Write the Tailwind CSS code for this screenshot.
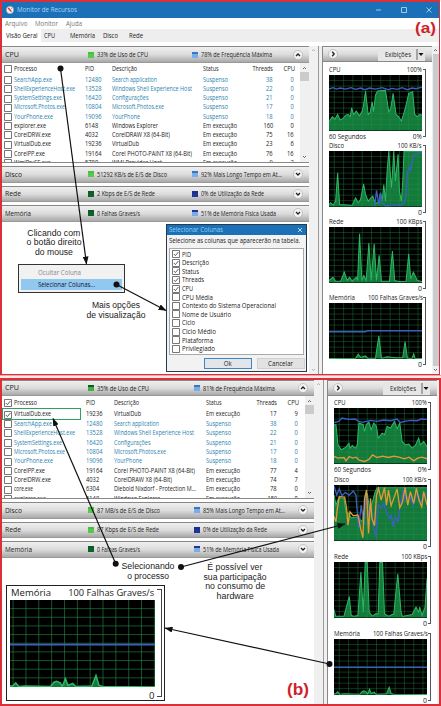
<!DOCTYPE html>
<html lang="pt-BR">
<head>
<meta charset="utf-8">
<title>Monitor de Recursos</title>
<script src="https://cdn.jsdelivr.net/npm/@tailwindcss/browser@4"></script>
</head>
<body class="w-[441px] h-[706px] overflow-hidden bg-white font-['Open_Sans','Noto_Sans',sans-serif] text-[#222]">
<div id="app" class="relative w-[441px] h-[706px] overflow-hidden"></div>
<script>
// Text run condensed or expanded horizontally to w pixels
const T = (s, w, cls = 'origin-left') => `<span data-w="${w}" class="inline-block shrink-0 whitespace-nowrap ${cls}">${s}</span>`;
const R = 'origin-right', C = 'origin-center';

const check = (on) => `<svg class="w-[8px] h-[8px] shrink-0" viewBox="0 0 8 8"><rect x=".6" y=".6" width="6.8" height="6.8" fill="#fff" stroke="#555" stroke-width=".8"/>${on ? '<path d="M1.8 4l1.6 1.6 3-3.6" fill="none" stroke="#333" stroke-width=".8"/>' : ''}</svg>`;

const square = (top, bottom) => `<span class="flex flex-col w-[6px] h-[6px] shrink-0"><span class="w-full h-[2px]" style="background:${top}"></span><span class="w-full h-[4px]" style="background:${bottom}"></span></span>`;

const round = (d) => `<svg class="w-[10px] h-[10px] shrink-0" viewBox="0 0 10 10"><circle cx="5" cy="5" r="4.5" fill="#f3f3f3" stroke="#aaa" stroke-width=".6"/><path d="${d}" fill="none" stroke="#222" stroke-width="1.3"/></svg>`;
const UP = 'M3 6l2-2 2 2', DOWN = 'M3 4l2 2 2-2', RIGHT = 'M4.2 2.8l2 2.2-2 2.2';

const bar = (b, h, x2) => `<div class="flex items-center shrink-0 w-full border-t border-[#888] border-b border-b-[#999] bg-linear-to-b from-[#efefef] via-[#dcdcdc] to-[#a9a9a9] text-[7px] leading-none" style="height:${h}px">
  <div class="w-[86px] shrink-0 pl-[3px] text-[7.5px]">${T(b.n, b.nw)}</div>
  <div class="flex items-center gap-[3px] shrink-0" style="width:${x2 - 88}px">${square(b.c1[0], b.c1[1])}${T(b.a, b.aw)}</div>
  <div class="flex items-center gap-[3px] flex-1 min-w-0">${square(b.c2[0], b.c2[1])}${T(b.b, b.bw)}</div>
  <div class="w-[16px] shrink-0">${round(b.up ? UP : DOWN)}</div></div>`;

const cell = (w, html, cls) => `<div style="width:${w}px" class="shrink-0 flex ${cls || ''}">${html}</div>`;

const row = (r, g) => {
  const live = r[4] === 'Em execução';
  return `<div class="flex items-center shrink-0 text-[6.6px] leading-none ${live ? 'text-[#222]' : 'text-[#2b83ae]'}" style="height:${g.pitch}px">
  <div class="w-[12px] shrink-0 pl-[2px] flex">${check(r[7])}</div>
  ${cell(g.pid - 14, T(r[0], r[1]))}${cell(g.desc - g.pid, T(r[2], r[2].length * 3.3))}
  ${cell(g.stat - g.desc, T(r[3][0], r[3][1]))}${cell(36, T(r[4], live ? 34 : 25))}
  ${cell(g.thr - g.stat - 36, T(r[5], String(r[5]).length * 3.3, R), 'justify-end')}
  ${cell(g.cpu - g.thr, T(r[6], String(r[6]).length * 3.3, R), 'justify-end')}</div>`;
};

const scrollbar = () => `<div class="w-[9px] shrink-0 bg-[#f0f0f0] flex flex-col items-center pt-[3px] pb-[3px]">
  <svg class="w-[5px] h-[4px]" viewBox="0 0 5 4"><path d="M1 3l1.5-1.5L4 3" fill="none" stroke="#444" stroke-width=".8"/></svg>
  <div class="w-full h-[9px] mt-[2px] bg-[#cbcbcb]"></div><div class="flex-1"></div>
  <svg class="w-[5px] h-[4px]" viewBox="0 0 5 4"><path d="M1 1l1.5 1.5L4 1" fill="none" stroke="#444" stroke-width=".8"/></svg></div>`;

const table = (rows, g) => `<div class="flex shrink-0 border-b border-[#888] overflow-hidden bg-white" style="height:${g.h}px">
  <div class="flex-1 min-w-0">
    <div class="flex items-center text-[6.6px] leading-none" style="height:${g.head}px">
      <div class="w-[12px] shrink-0 pl-[2px] flex">${check(g.on)}</div>
      ${cell(g.pid - 14, T('Processo', 23))}${cell(g.desc - g.pid, T('PID', 9))}
      ${cell(g.stat - g.desc, T('Descrição', 25))}${cell(30, T('Status', 15.5))}
      ${cell(g.thr - g.stat - 30, T('Threads', 20.5, R), 'justify-end')}${cell(g.cpu - g.thr + 1, T('CPU', 11.5, R), 'justify-end')}
    </div>
    ${rows.map(r => row(r, g)).join('')}
  </div>${scrollbar()}</div>`;

const graph = (c) => {
  let grid = '';
  for (let x = c.gx || 16; x < 280; x += c.gs || 28) grid += `M${x} 0V166`;
  for (let y = 16.5; y < 160; y += 16.5) grid += `M0 ${y}H280`;
  const line = (p, col, w) => p ? `<polyline points="${p}" fill="none" stroke="${col}" stroke-width="${w}"/>` : '';
  return `<svg class="block w-full h-full bg-black" viewBox="0 0 280 166" preserveAspectRatio="none">
  ${c.g ? `<polygon points="0,166 ${c.g} 280,166" fill="#137a3b"/>` : ''}
  <path d="${grid}" stroke="#27964b" stroke-opacity=".6" stroke-width="1.8" fill="none"/>
  ${line(c.g, '#2eb863', 3)}${line(c.b, '#3d5fc4', c.bw || 4)}${line(c.o, '#e39a35', 4)}</svg>`;
};

const chart = (c) => `<div class="flex shrink-0 text-[7px] leading-none" style="height:${c.h}px">
  <div class="w-[93px] shrink-0 flex flex-col">
    <div class="h-[11px] shrink-0 flex items-center justify-between">${T(c.n, c.nw)}${T(c.r, c.rw, R)}</div>
    <div class="h-[55.5px] shrink-0">${graph(c)}</div>
    <div class="h-[11px] shrink-0 flex items-center justify-between">${c.l ? T(c.l, 37) : '<span></span>'}${T(c.z, c.z.length > 1 ? 9 : 4, R)}</div>
  </div>
  <div class="w-[3px] h-[68px] ml-[1px] mt-[5px] border border-l-0 border-[#555]"></div></div>`;

const side = (list, pad) => `<div class="w-[110px] shrink-0 flex flex-col border-l border-[#888] bg-white">
  <div class="h-[16px] shrink-0 flex items-center pl-[5px] pr-[7px] border-t border-b border-[#888] bg-linear-to-b from-[#efefef] via-[#dcdcdc] to-[#a9a9a9] text-[7px] leading-none">
    ${round(RIGHT)}
    <div class="ml-auto h-[13px] w-[47px] flex items-center bg-[#e6e6e6] pl-[7px]"><div class="w-[31px] shrink-0">${T('Exibições', 26)}</div><svg class="w-[8px] h-[11px] shrink-0" viewBox="0 0 8 11"><path d="M1 0v11" stroke="#444" stroke-width=".8"/><path d="M2.500 4h5L5 7z" fill="#111"/></svg></div>
  </div>
  <div class="pl-[6px]" style="padding-top:${pad}px">${list.map(chart).join('')}</div></div>`;

const G = ['#43c03f', '#56c84b'], DG = ['#0c5a26', '#115e2a'], MG = ['#0c5a26', '#3fae3c'], LB = ['#3c74c4', '#78aee8'], DB = ['#1b2f8a', '#1f3698'], MB = ['#1f3698', '#78aee8'];
const S = 'Suspenso', E = 'Em execução';
const rowsA = [
  ['SearchApp.exe', 38, '12480', ['Search application', 45], S, 38, 0],
  ['ShellExperienceHost.exe', 61, '13528', ['Windows Shell Experience Host', 80], S, 22, 0],
  ['SystemSettings.exe', 48, '16420', ['Configurações', 36.5], S, 21, 0],
  ['Microsoft.Photos.exe', 51, '10804', ['Microsoft.Photos.exe', 52], S, 17, 0],
  ['YourPhone.exe', 39, '19096', ['YourPhone', 28], S, 18, 0],
  ['explorer.exe', 32, '6148', ['Windows Explorer', 46], E, 160, 0],
  ['CorelDRW.exe', 37, '4032', ['CorelDRAW X8 (64-Bit)', 58], E, 75, 16],
  ['VirtualDub.exe', 37, '19236', ['VirtualDub', 27], E, 23, 6],
  ['CorelPP.exe', 31, '19164', ['Corel PHOTO-PAINT X8 (64-Bit)', 80], E, 76, 16],
  ['WmiPrvSE.exe', 37, '5780', ['WMI Provider Host', 50], E, 9, 3]];
const rowsB = [
  ['VirtualDub.exe', 37, '19236', ['VirtualDub', 27], E, 17, 9, true],
  rowsA[0], rowsA[1], rowsA[2], rowsA[3], rowsA[4],
  ['CorelPP.exe', 31, '19164', ['Corel PHOTO-PAINT X8 (64-Bit)', 81], E, 77, 4],
  ['CorelDRW.exe', 37, '4032', ['CorelDRAW X8 (64-Bit)', 58], E, 74, 7],
  ['core.exe', 19, '6304', ['Diebold Nixdorf - Protection M...', 82], E, 78, 0],
  ['explorer.exe', 32, '6148', ['Windows Explorer', 46], E, 159, 0]];

const barsA = [
  { n: 'CPU', nw: 14, c1: G, a: '33% de Uso de CPU', aw: 51, c2: LB, b: '78% de Frequência Máxima', bw: 71, up: true },
  { n: 'Disco', nw: 17, c1: G, a: '51292 KB/s de E/S de Disco', aw: 70, c2: LB, b: '92% Mais Longo Tempo em At...', bw: 81 },
  { n: 'Rede', nw: 16, c1: DG, a: '2 Kbps de E/S de Rede', aw: 58, c2: DB, b: '0% de Utilização da Rede', bw: 63 },
  { n: 'Memória', nw: 26, c1: DG, a: '0 Falhas Graves/s', aw: 43, c2: MB, b: '51% de Memória Física Usada', bw: 75 }];
const barsB = [
  { n: 'CPU', nw: 14, c1: MG, a: '35% de Uso de CPU', aw: 52, c2: LB, b: '81% de Frequência Máxima', bw: 72, up: true },
  { n: 'Disco', nw: 17, c1: G, a: '87 MB/s de E/S de Disco', aw: 63, c2: LB, b: '85% Mais Longo Tempo em At...', bw: 82 },
  { n: 'Rede', nw: 16, c1: G, a: '87 Kbps de E/S de Rede', aw: 62, c2: DB, b: '0% de Utilização da Rede', bw: 64 },
  { n: 'Memória', nw: 27, c1: DG, a: '0 Falhas Graves/s', aw: 43, c2: MB, b: '51% de Memória Física Usada', bw: 76 }];

const memB = '0,164 5,164 11,158 17,165 30,164 78,165 85,157 90,155 97,158 101,165 107,150 112,163 121,159 127,165 158,164 166,144 172,163 180,165 280,166';
const chartsA = [
  { n: 'CPU', nw: 11.5, r: '100%', rw: 15, l: '60 Segundos', z: '0%', h: 76,
    g: '0,140 10,125 18,132 26,118 34,135 42,130 50,120 58,118 64,125 68,98 74,118 82,108 92,122 100,108 104,90 110,48 118,118 124,112 130,80 134,110 140,60 146,48 170,46 180,110 186,100 193,55 202,118 210,125 218,138 226,112 232,90 240,55 252,50 258,118 266,125 272,118 280,120',
    b: '0,42 12,38 22,42 34,39 50,42 66,38 80,43 95,39 108,44 122,39 140,42 160,38 178,44 190,40 205,43 220,38 236,44 250,39 262,41 280,36' },
  { n: 'Disco', nw: 15, r: '100 KB/s', rw: 24, z: '0', h: 76,
    g: '0,160 5,155 12,162 20,150 26,65 32,160 70,162 80,140 88,155 95,145 104,98 110,130 118,150 126,140 132,135 140,158 150,150 155,125 160,150 165,100 170,150 175,60 180,0 184,60 188,110 192,50 195,0 200,90 208,10 212,120 218,150 222,90 226,0 280,0',
    b: '138,165 143,118 150,160 155,125 160,155 170,164 220,160 230,150 237,60 243,50 246,60 253,12 280,5' },
  { n: 'Rede', nw: 14.5, r: '100 KBps', rw: 26, z: '0', h: 76,
    g: '0,160 12,150 20,162 35,162 46,135 55,160 62,150 70,162 82,150 86,160 92,20 99,160 105,145 112,160 120,48 127,160 136,50 143,160 151,85 158,162 182,162 191,72 198,160 210,163 232,162 240,80 246,155 254,135 266,160 280,163' },
  { n: 'Memória', nw: 26, r: '100 Falhas Graves/s', rw: 55, z: '0', h: 76,
    g: '0,166 80,165 88,153 96,163 110,158 116,165 140,165 150,98 158,165 175,161 200,164 222,163 229,115 236,165 250,165 255,152 259,165 280,166', b: '0,86 110,86 115,83 280,83' }];
const chartsB = [
  { n: 'CPU', nw: 11.5, r: '100%', rw: 15, l: '60 Segundos', z: '0%', h: 77,
    g: '0,50 6,50 12,110 22,125 35,118 45,105 48,120 55,112 65,120 70,110 75,45 88,50 92,70 97,50 105,42 112,65 120,45 128,55 133,90 145,75 152,80 160,55 170,60 182,40 190,62 198,45 205,100 215,110 225,108 235,120 245,112 255,90 260,110 270,100 280,115',
    b: '0,44 14,40 24,30 44,34 64,33 74,40 86,43 110,37 130,40 150,36 170,38 190,33 200,44 212,40 230,37 250,38 262,33 280,34',
    o: '0,145 12,150 30,148 36,158 46,145 56,150 66,147 76,156 92,160 106,153 116,140 130,148 146,144 164,148 180,144 196,147 212,152 226,147 240,158 252,150 264,147 280,152' },
  { n: 'Disco', nw: 15, r: '100 KB/s', rw: 24, z: '0', h: 77,
    g: '0,30 6,60 14,38 30,40 36,80 44,85 52,98 72,95 84,110 92,70 100,25 108,75 116,50 124,20 130,8 280,8',
    b: '0,3 8,30 16,12 24,32 34,22 46,30 58,18 66,30 74,130 82,60 90,120 96,25 104,90 112,60 118,120 126,155 134,60 142,70 150,55 158,80 166,100 172,90 178,125 184,95 192,110 200,60 208,15 216,45 228,30 238,60 250,25 262,50 280,20',
    o: '0,95 6,110 10,70 16,35 32,36 38,70 42,120 48,80 58,92 72,90 80,130 87,158 92,40 98,15 104,145 110,40 114,100 122,122 128,30 134,10 142,45 152,8 158,60 164,15 172,62 180,40 190,12 198,68 206,52 214,8 222,60 230,20 240,55 248,10 256,45 264,65 270,20 280,60' },
  { n: 'Rede', nw: 14.5, r: '100 KBps', rw: 26, z: '0', h: 77,
    g: '0,142 5,162 30,162 38,132 46,103 52,160 60,162 72,160 81,30 88,150 94,0 100,0 106,150 115,162 125,155 133,155 138,0 146,0 152,155 165,162 180,155 192,35 202,150 206,163 235,157 247,135 255,150 258,135 265,160 274,135 280,50' },
  { n: 'Memória', nw: 26, r: '100 Falhas Graves/s', rw: 55, z: '0', h: 70, g: memB, b: '0,85 280,85' }];

const gA = { h: 100, head: 12.5, pitch: 9.22, pid: 85, desc: 112, stat: 203, thr: 273, cpu: 294 };
const gB = { h: 103, head: 14, pitch: 9.38, pid: 86, desc: 113.5, stat: 205.5, thr: 277, cpu: 298, on: true };

const opts = [['PID', 9, 1], ['Descrição', 27, 1], ['Status', 17, 1], ['Threads', 22, 1], ['CPU', 11, 1], ['CPU Média', 31, 0], ['Contexto do Sistema Operacional', 94, 0], ['Nome de Usuário', 49, 0], ['Ciclo', 13, 0], ['Ciclo Médio', 34, 0], ['Plataforma', 31, 0], ['Privilegiado', 33, 0]];

const note = (x, y, lines) => `<div class="absolute flex flex-col items-center -translate-x-1/2 font-['Liberation_Sans',sans-serif] text-[8.3px] leading-[9.7px] text-[#222]" style="left:${x}px;top:${y}px">${lines.map(l => T(l[0], l[1], C)).join('')}</div>`;

document.getElementById('app').innerHTML = `
<section class="w-[440px] h-[375px] border-2 border-b border-r-1 border-[#dc3038] flex flex-col overflow-hidden">
  <div class="h-[16px] shrink-0 bg-[#1c70b7] flex items-center pl-[4px] text-[7.2px] leading-none text-[#a9d8f5]">
    <svg class="w-[8px] h-[8px] mr-[3px]" viewBox="0 0 8 8"><circle cx="4" cy="4" r="3.7" fill="#f4f1ee" stroke="#8d8d8d" stroke-width=".5"/><path d="M2.2 2l3.2 3.6" stroke="#c5332b" stroke-width="1.3"/><path d="M5 1.8l.8 1" stroke="#555" stroke-width=".6"/></svg>
    ${T('Monitor de Recursos', 60)}
    <svg class="w-[60px] h-[10px] ml-auto mr-[6px]" viewBox="0 0 60 10" fill="none" stroke="#a9d5f2" stroke-width=".9"><path d="M3 5h5M28.500 2.500h5v5h-5zM53.500 2.500l5 5m0-5l-5 5"/></svg>
  </div>
  <div class="h-[11px] shrink-0 bg-white flex items-center pl-[3px] text-[7px] leading-none text-[#777]">
    <div class="w-[30px] shrink-0">${T('Arquivo', 22.5)}</div><div class="w-[31px] shrink-0">${T('Monitor', 23)}</div>${T('Ajuda', 16)}
  </div>
  <div class="h-[13px] shrink-0 bg-[#eeeeee] flex items-center text-[7px] leading-none">
    <div class="w-[39px] h-[13px] shrink-0 bg-white flex items-center pl-[4px]">${T('Visão Geral', 31.5)}</div>
    <div class="w-[29px] shrink-0 pl-[3px]">${T('CPU', 11)}</div><div class="w-[33px] shrink-0">${T('Memória', 25)}</div><div class="w-[26px] shrink-0">${T('Disco', 15)}</div>${T('Rede', 14)}
  </div>
  <div class="h-[4px] shrink-0"></div>
  <div class="flex flex-1 min-h-0">
    <div class="w-[307px] shrink-0 flex flex-col">
      ${bar(barsA[0], 17, 192)}${table(rowsA, gA)}
      <div class="flex flex-col gap-[3px] pt-[3px]">${barsA.slice(1).map(b => bar(b, 16.5, 192)).join('')}</div>
    </div>
    <div class="w-[9px] shrink-0 bg-[#f0f0f0] flex flex-col items-center justify-between py-[2px]">
      <svg class="w-[5px] h-[4px]" viewBox="0 0 5 4"><path d="M1 3l1.500-1.500L4 3" fill="none" stroke="#999" stroke-width=".7"/></svg>
      <svg class="w-[5px] h-[4px]" viewBox="0 0 5 4"><path d="M1 1l1.500 1.500L4 1" fill="none" stroke="#999" stroke-width=".7"/></svg>
    </div>
    <div class="w-[4px] shrink-0 border-l border-[#999] bg-[#f0f0f0]"></div>
    ${side(chartsA, 2)}
    <div class="flex-1 bg-[#f0f0f0] flex flex-col items-center py-[2px]">
      <svg class="w-[5px] h-[4px]" viewBox="0 0 5 4"><path d="M1 3l1.500-1.500L4 3" fill="none" stroke="#444" stroke-width=".8"/></svg>
      <div class="w-[6px] flex-1 my-[2px] bg-[#cbcbcb]"></div>
      <svg class="w-[5px] h-[4px]" viewBox="0 0 5 4"><path d="M1 1l1.500 1.500L4 1" fill="none" stroke="#444" stroke-width=".8"/></svg>
    </div>
  </div>
</section>
<div class="h-[3px] w-full border-t border-[#f3a3a8] bg-[#fde8e9]"></div>
<section class="w-[441px] h-[328px] border-2 border-[#dc3038] flex overflow-hidden">
  <div class="w-[312px] shrink-0 flex flex-col">
    ${bar(barsB[0], 16, 194)}${table(rowsB, gB)}
    <div class="flex flex-col gap-[3px] pt-[3px]">${barsB.slice(1).map(b => bar(b, 16.6, 194)).join('')}</div>
  </div>
  <div class="w-[9px] shrink-0 bg-[#f0f0f0] flex justify-center pt-[2px]"><svg class="w-[5px] h-[4px]" viewBox="0 0 5 4"><path d="M1 3l1.500-1.500L4 3" fill="none" stroke="#999" stroke-width=".7"/></svg></div>
  <div class="w-[4px] shrink-0 border-l border-[#999] bg-[#f0f0f0]"></div>
  ${side(chartsB, 1)}
  <div class="flex-1 bg-[#f0f0f0]"></div>
</section>

<div class="absolute left-[18px] top-[264px] w-[107px] h-[29px] border border-[#333] bg-[#f1f1f1] p-[2px] text-[7.2px] leading-none">
  <div class="h-[12px] flex items-center pl-[17px] text-[#8a8a8a]">${T('Ocultar Coluna', 43)}</div>
  <div class="h-[11px] flex items-center pl-[17px] bg-[#90c8ef] text-[#113]">${T('Selecionar Colunas...', 57)}</div>
</div>

<div class="absolute left-[166px] top-[224px] w-[141px] h-[148px] border border-[#2a3a48] bg-[#f2f2f2] text-[7.2px] leading-none flex flex-col">
  <div class="h-[10px] shrink-0 bg-[#1c70b7] text-[#8fd0f5] flex items-center justify-between pl-[2px] pr-[3px]">${T('Selecionar Colunas', 54)}<svg class="w-[6px] h-[6px]" viewBox="0 0 6 6"><path d="M1 1l4 4m0-4L1 5" stroke="#cfe8fa" stroke-width=".9"/></svg></div>
  <div class="h-[12px] shrink-0 flex items-center pl-[2px]">${T('Selecione as colunas que aparecerão na tabela.', 131)}</div>
  <div class="mt-[1px] mx-[2px] h-[107px] shrink-0 border border-[#aaa] bg-white pt-[1px] pl-[2px]">
    ${opts.map(o => `<div class="h-[8.6px] flex items-center gap-[2px]">${check(o[2])}${T(o[0], o[1])}</div>`).join('')}
  </div>
  <div class="flex justify-end gap-[5px] mt-[3px] pr-[1px]">
    <div class="w-[48px] h-[11px] border border-[#3d86c4] bg-[#e2e6ea] flex items-center justify-center">${T('Ok', 8, C)}</div>
    <div class="w-[48px] h-[11px] border border-[#d0d0d0] bg-[#e2e2e2] flex items-center justify-center">${T('Cancelar', 25, C)}</div>
  </div>
</div>

<div class="absolute left-[2px] top-[408px] w-[79px] h-[12px] border border-[#2fa065]"></div>

<div class="absolute left-[6px] top-[585px] w-[159px] h-[116px] border border-[#222] bg-white flex text-[9.5px] leading-none">
  <div class="ml-[3px] w-[145px] flex flex-col shrink-0">
    <div class="h-[14px] shrink-0 flex items-center justify-between pl-[1px] pr-[1px]">${T('Memória', 40)}${T('100 Falhas Graves/s', 86, R)}</div>
    <div class="h-[87px] shrink-0">${graph({ gx: 6, gs: 24.8, g: memB, b: '0,85 280,85', bw: 3.5 })}</div>
    <div class="h-[13px] shrink-0 flex items-center justify-end pr-[1px] pt-[4px]">${T('0', 5.5, R)}</div>
  </div>
  <div class="w-[5px] h-[108px] ml-[2px] mt-[3px] border border-l-0 border-[#444]"></div>
</div>

<svg class="absolute inset-0 w-[441px] h-[706px] pointer-events-none" viewBox="0 0 441 706" fill="none" stroke="#111" stroke-width="1.2">
  <defs><marker id="tip" markerUnits="userSpaceOnUse" markerWidth="8" markerHeight="6" refX="7.5" refY="3" orient="auto"><path d="M0 0l8 3-8 3z" fill="#111" stroke="none"/></marker></defs>
  <path marker-end="url(#tip)" d="M60.5 68.5L86.500 264"/><path marker-end="url(#tip)" d="M116.5 284.5L166 310.5"/><path marker-end="url(#tip)" d="M115.7 563.7L53 418.5"/><path marker-end="url(#tip)" d="M181 567L345 524"/><path marker-end="url(#tip)" d="M329.5 664L165 628"/>
  <g fill="#111" stroke="none"><circle cx="60.5" cy="68.5" r="3"/><circle cx="116.5" cy="284.5" r="3"/><circle cx="115.7" cy="563.7" r="3"/><circle cx="181" cy="567" r="3"/><circle cx="329.5" cy="664" r="3"/></g>
</svg>
${note(54, 228.5, [['Clicando com', 53], ['o botão direito', 55], ['do mouse', 38]])}
${note(116, 301, [['Mais opções', 48], ['de visualização', 59]])}
${note(148, 562, [['Selecionando', 53], ['o processo', 42]])}
${note(235, 563, [['É possível ver', 55], ['sua participação', 63], ['no consumo de', 60], ['hardware', 37]])}
<div class="absolute left-[415px] top-[19px] font-['Liberation_Sans',sans-serif] font-bold text-[15px] leading-[18px] text-[#cf2229]">${T('(a)', 21)}</div>
<div class="absolute left-[287px] top-[680px] font-['Liberation_Sans',sans-serif] font-bold text-[16px] leading-[19px] text-[#cf2229]">${T('(b)', 22)}</div>`;

// The natural width changes once the stylesheet and fonts are ready, so each run is refitted on resize
const fit = (e) => {
  e.style.transform = 'none';
  const n = e.getBoundingClientRect().width;
  if (n) e.style.transform = `scaleX(${(e.dataset.w / n).toFixed(4)})`;
};
const watcher = new ResizeObserver(list => list.forEach(x => fit(x.target)));
const runs = document.querySelectorAll('[data-w]');
runs.forEach(e => { fit(e); watcher.observe(e); });
window.addEventListener('load', () => runs.forEach(fit));
document.fonts.ready.then(() => runs.forEach(fit));
</script>
</body>
</html>
